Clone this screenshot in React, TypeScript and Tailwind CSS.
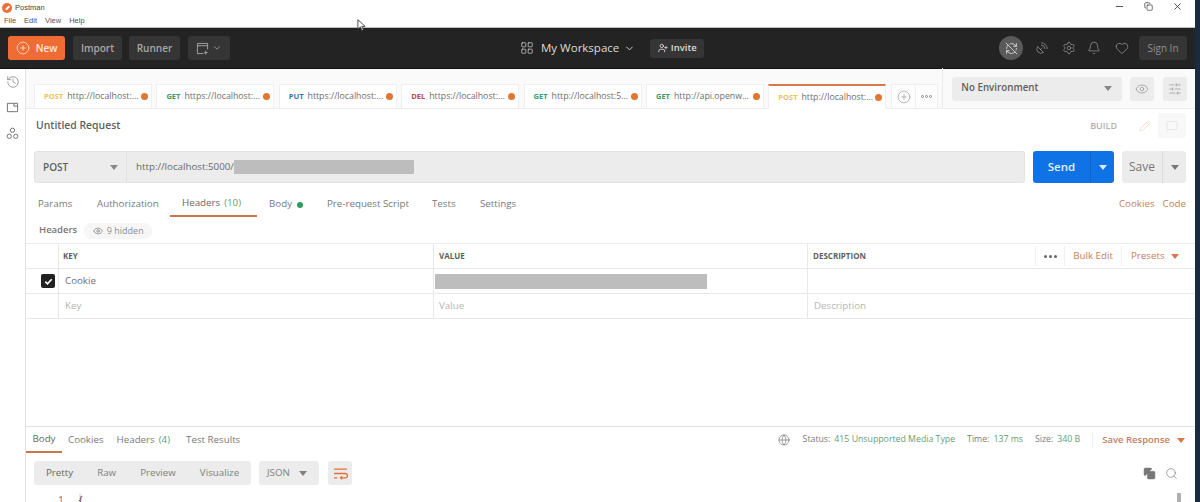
import { Bell, ChevronDown, Copy, Eye, Globe, Heart, History, LayoutGrid, MessageSquare, Minus, Pencil, PlusCircle, RefreshCwOff, SatelliteDish, Search, Settings, SlidersHorizontal, UserPlus, X } from "lucide-react";

const requestTabs = [
  { method: "POST", color: "text-[#e6c552]", url: "http://localhost:..." },
  { method: "GET", color: "text-[#3f9a66]", url: "https://localhost:..." },
  { method: "PUT", color: "text-[#2f79a8]", url: "https://localhost:..." },
  { method: "DEL", color: "text-[#b84a4a]", url: "https://localhost:..." },
  { method: "GET", color: "text-[#3f9a66]", url: "http://localhost:5..." },
  { method: "GET", color: "text-[#3f9a66]", url: "http://api.openw..." },
  { method: "POST", color: "text-[#e6c552]", url: "http://localhost:...", active: true },
];

const Caret = ({ className }: { className: string }) => (
  <span className={`block w-0 h-0 border-x-[4px] border-x-transparent border-t-[5px] ${className}`} />
);

const TableRow = ({ keyText, valueText, descText, muted, checked, bar }: { keyText: string; valueText?: string; descText?: string; muted?: boolean; checked?: boolean; bar?: boolean }) => (
  <div className="h-[25px] flex items-stretch border-b border-[#e8e8e8] text-[9.75px]">
    <div className="w-[33px] border-r border-[#e8e8e8] flex items-center justify-end pr-[3px]">
      {checked && (
        <div className="w-[14px] h-[14px] rounded-[2px] bg-[#222222] flex items-center justify-center">
          <svg viewBox="0 0 12 12" className="w-[11px] h-[11px]"><path d="M2.5 6.2l2.4 2.4 4.6-5" fill="none" stroke="#fff" strokeWidth="1.8" /></svg>
        </div>
      )}
    </div>
    <div className={`w-[375px] border-r border-[#e8e8e8] pl-[6px] flex items-center ${muted ? "text-[#b5b5b5]" : "text-[#707070]"}`}>{keyText}</div>
    <div className="w-[374px] border-r border-[#e8e8e8] pl-[5px] flex items-center text-[#b5b5b5]">
      {bar ? <div className="w-[272px] h-[15px] bg-[#bdbdbd] -ml-[4px]" /> : valueText}
    </div>
    <div className="flex-1 pl-[6px] flex items-center text-[#b5b5b5]">{descText}</div>
  </div>
);

export default function App() {
  return (
    <div className="w-[1200px] h-[502px] overflow-hidden flex bg-white relative font-['Open_Sans',sans-serif] text-[#707070]">
      <div className="w-[1195px] h-full flex flex-col">
        {/* Window title + menu */}
        <div className="h-[28px] shrink-0 flex border-b border-[#bdbdbd]">
          <div className="pl-[2px] pt-[2px]">
            <div className="flex items-center gap-[3px] h-[12px]">
              <span className="w-[10px] h-[10px] rounded-full bg-[#ef6c35] flex items-center justify-center">
                <span className="w-[5px] h-[1.5px] bg-white -rotate-45" />
              </span>
              <span className="text-[7.5px] text-[#444444] font-['Liberation_Sans',sans-serif]">Postman</span>
            </div>
            <div className="flex gap-[8px] pl-[2px] mt-[1px] text-[7.5px] leading-[12px] text-[#555555] font-['Liberation_Sans',sans-serif]">
              <span>File</span><span>Edit</span><span>View</span><span>Help</span>
            </div>
          </div>
          <div className="ml-auto flex items-start gap-[19px] pr-[12px] pt-[1px] text-[#444444]">
            <Minus className="w-[11px] h-[11px]" />
            <Copy className="w-[9px] h-[9px] mt-[1px]" strokeWidth={2} />
            <X className="w-[11px] h-[11px]" />
          </div>
        </div>

        {/* Header bar */}
        <div className="h-[41px] shrink-0 bg-[#232323] border-b border-[#111111] flex items-center pl-[8px] pr-[8px]">
          <div className="w-[57px] h-6 rounded-[3px] bg-[#ef6c35] text-[#fbe6dc] text-[10px] font-semibold flex items-center justify-center gap-[6px]">
            <PlusCircle className="w-[14px] h-[14px]" strokeWidth={1.3} />New
          </div>
          <div className="w-[49px] h-6 ml-[8px] flex items-center justify-center rounded-[3px] bg-[#353535] text-[#a8a8a8] text-[10px] font-semibold">Import</div>
          <div className="w-[51px] h-6 ml-[7px] flex items-center justify-center rounded-[3px] bg-[#353535] text-[#a8a8a8] text-[10px] font-semibold">Runner</div>
          <div className="w-[42px] h-6 ml-[8px] rounded-[3px] bg-[#353535] flex items-center justify-center gap-[3px] text-[#a8a8a8]">
            <svg viewBox="0 0 14 14" className="w-[13px] h-[13px]" fill="none" stroke="currentColor" strokeWidth="1"><path d="M8 12.5H1.5v-11h11V8M1.5 4h11M10.5 9.5v4M8.5 11.5h4" /></svg>
            <ChevronDown className="w-[10px] h-[10px]" />
          </div>
          <div className="ml-[290px] flex items-center text-[#dcdcdc]">
            <LayoutGrid className="w-[14px] h-[14px]" strokeWidth={1.2} />
            <span className="ml-[7px] text-[11.5px]">My Workspace</span>
            <ChevronDown className="w-[11px] h-[11px] ml-[5px]" />
            <div className="ml-[15px] w-[54px] h-[19px] rounded-[3px] bg-[#353535] flex items-center justify-center gap-[3px] text-[9.5px] font-semibold text-[#dcdcdc]">
              <UserPlus className="w-[10px] h-[10px]" />Invite
            </div>
          </div>
          <div className="ml-auto flex items-center text-[#a8a8a8]">
            <div className="w-6 h-6 rounded-full bg-[#5a5a5a] flex items-center justify-center text-[#e8e8e8]">
              <RefreshCwOff className="w-[13px] h-[13px]" strokeWidth={1.5} />
            </div>
            <SatelliteDish className="w-[14px] h-[14px] ml-[12px]" strokeWidth={1.1} />
            <Settings className="w-[14px] h-[14px] ml-[13px]" strokeWidth={1.1} />
            <Bell className="w-[14px] h-[14px] ml-[11px]" strokeWidth={1.1} />
            <Heart className="w-[14px] h-[14px] ml-[14px]" strokeWidth={1.1} />
            <div className="ml-[10px] w-[48px] h-6 rounded-[3px] bg-[#353535] flex items-center justify-center text-[10px] text-[#8f8f8f]">Sign In</div>
          </div>
        </div>

        <div className="flex-1 flex min-h-0">
          {/* Sidebar */}
          <div className="w-[26px] shrink-0 border-r border-[#e2e2e2] flex flex-col items-center pt-[6px] text-[#6a6a6a]">
            <History className="w-[14px] h-[14px]" strokeWidth={1.1} />
            <svg viewBox="0 0 14 14" className="w-[13px] h-[13px] mt-[12px]" fill="none" stroke="currentColor" strokeWidth="1"><path d="M1.5 2.5h11v9h-11zM8.5 2.5v3h4" /></svg>
            <svg viewBox="0 0 14 14" className="w-[13px] h-[13px] mt-[13px]" fill="none" stroke="currentColor" strokeWidth="1"><circle cx="7" cy="3.5" r="2.3" /><circle cx="3.5" cy="10" r="2.3" /><circle cx="10.5" cy="10" r="2.3" /></svg>
          </div>

          <div className="flex-1 min-w-0 flex flex-col">
            {/* Request tabs */}
            <div className="h-[40px] shrink-0 bg-[#fafafa] border-b border-[#ececec] flex items-end pl-[8px]">
              <div className="flex gap-[4.4px]">
                {requestTabs.map((tab, i) => (
                  <div key={i} className={`w-[118px] flex items-center pl-[9px] bg-white border-x border-[#efefef] text-[8.75px] whitespace-nowrap -mb-px ${tab.active ? "h-[25px] border-t-2 border-t-[#d9794a]" : "h-[24px] border-t"}`}>
                    <span className={`text-[7.5px] font-bold mr-[4px] ${tab.color}`}>{tab.method}</span>
                    <span className="text-[#6e6e6e]">{tab.url}</span>
                    <span className="w-[7px] h-[7px] rounded-full bg-[#e0762f] ml-auto mr-[3px]" />
                  </div>
                ))}
              </div>
              <div className="ml-[5px] w-[47px] h-[24px] flex border border-[#efefef] border-b-0 text-[#8a8a8a] bg-[#fdfdfd]">
                <div className="w-[24px] border-r border-[#efefef] flex items-center justify-center"><PlusCircle className="w-[14px] h-[14px]" strokeWidth={1} /></div>
                <div className="flex-1 flex items-center justify-center gap-[1px]">
                  <span className="w-[3px] h-[3px] rounded-full border border-[#888888]" />
                  <span className="w-[3px] h-[3px] rounded-full border border-[#888888]" />
                  <span className="w-[3px] h-[3px] rounded-full border border-[#888888]" />
                </div>
              </div>
              <div className="ml-[4px] h-[40px] flex-1 border-l border-[#ececec] flex items-center pl-[9px] pt-[1px] gap-[8px]">
                <div className="w-[170px] h-6 rounded-[3px] bg-[#ececec] flex items-center justify-between pl-[9px] pr-[10px] text-[9.75px] font-semibold text-[#606060]">
                  No Environment<Caret className="border-t-[#888888]" />
                </div>
                <div className="w-6 h-6 rounded-[3px] bg-[#ececec] flex items-center justify-center text-[#8a8a8a]"><Eye className="w-[14px] h-[14px]" strokeWidth={1.1} /></div>
                <div className="w-6 h-6 rounded-[3px] bg-[#ececec] flex items-center justify-center text-[#8a8a8a] ml-[1px]"><SlidersHorizontal className="w-[14px] h-[14px]" strokeWidth={1.1} /></div>
              </div>
            </div>

            {/* Request name */}
            <div className="h-[31px] shrink-0 flex items-center pl-[10px] pr-[9px] mt-[1px]">
              <span className="text-[10.4px] font-semibold text-[#5f5f5f]">Untitled Request</span>
              <span className="ml-auto text-[9px] font-semibold text-[#b0b0b0]">BUILD</span>
              <div className="ml-[14px] w-[55px] h-[25px] flex rounded-[3px] bg-[#f8f8f8]">
                <div className="w-[27px] bg-white flex items-center justify-center text-[#f0c4ae]"><Pencil className="w-[12px] h-[12px]" strokeWidth={1.1} /></div>
                <div className="flex-1 flex items-center justify-center text-[#d6d6d6]"><MessageSquare className="w-[12px] h-[12px]" strokeWidth={1.1} /></div>
              </div>
            </div>

            {/* URL bar */}
            <div className="h-[32px] shrink-0 flex pl-[8px] pr-[9px] mt-[10px]">
              <div className="w-[93px] bg-[#ececec] border border-[#e2e2e2] rounded-l-[3px] flex items-center justify-between pl-[8px] pr-[8px] text-[10px] font-semibold text-[#5f5f5f]">
                POST<Caret className="border-t-[#888888]" />
              </div>
              <div className="w-[898px] bg-[#ececec] border border-l-0 border-[#e2e2e2] rounded-r-[3px] flex items-center pl-[9px] text-[9.75px] text-[#6a6a6a]">
                http://localhost:5000/<div className="w-[180px] h-[14px] bg-[#bdbdbd]" />
              </div>
              <div className="ml-[8px] w-[81px] rounded-[3px] bg-[#0f72e5] flex text-white">
                <div className="w-[57px] flex items-center justify-center text-[11.5px] font-semibold text-[#e3f0ff]">Send</div>
                <div className="flex-1 border-l border-[#0d65cc] flex items-center justify-center"><Caret className="border-t-[#dcebff]" /></div>
              </div>
              <div className="ml-[8px] w-[64px] rounded-[3px] bg-[#ececec] flex">
                <div className="w-[40px] flex items-center justify-center text-[12px] text-[#777777]">Save</div>
                <div className="flex-1 border-l border-[#dcdcdc] flex items-center justify-center"><Caret className="border-t-[#777777]" /></div>
              </div>
            </div>

            {/* Request sub tabs */}
            <div className="h-[34px] shrink-0 flex items-stretch pr-[9px] text-[9.75px] text-[#7a7a7a]">
              <div className="flex items-center pt-[9px] pl-[12px] w-[71px]">Params</div>
              <div className="flex items-center pt-[9px] w-[73px]">Authorization</div>
              <div className="w-[87px] flex items-center justify-center pt-[9px] pr-[4px] border-b-2 border-[#c9764d] text-[#666666]">Headers<span className="ml-[4px] text-[#5f9e78]">(10)</span></div>
              <div className="flex items-center pt-[9px] ml-[12px] w-[58px]">Body<span className="ml-[5px] w-[6px] h-[6px] rounded-full bg-[#2f9a5a]" /></div>
              <div className="flex items-center pt-[9px] w-[105px]">Pre-request Script</div>
              <div className="flex items-center pt-[9px] w-[48px]">Tests</div>
              <div className="flex items-center pt-[9px]">Settings</div>
              <div className="ml-auto flex items-center pt-[9px] gap-[8px] text-[#c47f58]"><span>Cookies</span><span>Code</span></div>
            </div>

            {/* Headers label */}
            <div className="h-[26px] shrink-0 flex items-center pl-[13px] pt-[1px] text-[9.5px] font-semibold text-[#777777]">
              Headers
              <div className="ml-[7px] h-[16px] w-[68px] rounded-full bg-[#f6f6f6] flex items-center justify-center gap-[4px] font-normal text-[9px] text-[#8e8e8e]">
                <Eye className="w-[10px] h-[10px]" />9 hidden
              </div>
            </div>

            {/* Headers table */}
            <div className="shrink-0 border-t border-[#ececec]">
              <div className="h-[25px] flex items-stretch border-b border-[#e8e8e8] text-[8px] font-bold text-[#5f5f5f]">
                <div className="w-[33px] border-r border-[#e8e8e8]" />
                <div className="w-[375px] border-r border-[#e8e8e8] pl-[4px] flex items-center">KEY</div>
                <div className="w-[374px] border-r border-[#e8e8e8] pl-[5px] flex items-center">VALUE</div>
                <div className="flex-1 pl-[5px] flex items-center">
                  DESCRIPTION
                  <div className="ml-auto flex items-center h-[20px] text-[9.75px] font-normal text-[#c47f58]">
                    <div className="w-[30px] h-full border-x border-[#efefef] flex items-center justify-center gap-[2px]">
                      <span className="w-[3px] h-[3px] rounded-full bg-[#666666]" />
                      <span className="w-[3px] h-[3px] rounded-full bg-[#666666]" />
                      <span className="w-[3px] h-[3px] rounded-full bg-[#666666]" />
                    </div>
                    <div className="w-[57px] h-full border-r border-[#efefef] flex items-center justify-center">Bulk Edit</div>
                    <div className="w-[73px] h-full pl-[9px] flex items-center gap-[6px]">Presets<Caret className="border-t-[#d9794a]" /></div>
                  </div>
                </div>
              </div>
              <TableRow keyText="Cookie" checked bar />
              <TableRow keyText="Key" valueText="Value" descText="Description" muted />
            </div>

            <div className="flex-1" />

            {/* Response */}
            <div className="h-[76px] shrink-0 border-t border-[#e2e2e2]">
              <div className="h-[26px] flex items-stretch text-[9.75px] text-[#7a7a7a]">
                <div className="w-[36px] flex items-center justify-center border-b-2 border-[#c9764d] text-[#666666]">Body</div>
                <div className="flex items-center ml-[6px]">Cookies</div>
                <div className="flex items-center ml-[13px]">Headers<span className="ml-[4px] text-[#5f9e78]">(4)</span></div>
                <div className="flex items-center ml-[16px]">Test Results</div>
                <div className="ml-auto flex items-center text-[8.75px] pr-[10px]">
                  <Globe className="w-[12px] h-[12px] text-[#666666] mr-[13px]" strokeWidth={1.2} />
                  <span>Status:</span><span className="ml-[4px] text-[#5f9e78]">415 Unsupported Media Type</span>
                  <span className="ml-[12px]">Time:</span><span className="ml-[4px] text-[#5f9e78]">137 ms</span>
                  <span className="ml-[12px]">Size:</span><span className="ml-[4px] text-[#5f9e78]">340 B</span>
                  <div className="ml-[12px] pl-[9px] border-l border-[#efefef] h-[16px] flex items-center gap-[7px] text-[9.5px] font-semibold text-[#c47f58]">Save Response<Caret className="border-t-[#d9794a]" /></div>
                </div>
              </div>
              <div className="flex items-center pl-[8px] pr-[17px] mt-[8px]">
                <div className="w-[217px] h-6 rounded-[3px] bg-[#ececec] flex items-center text-[9.75px] text-[#808080]">
                  <span className="ml-[12px] text-[#666666]">Pretty</span>
                  <span className="ml-[24px]">Raw</span>
                  <span className="ml-[24px]">Preview</span>
                  <span className="ml-[24px]">Visualize</span>
                </div>
                <div className="ml-[8px] w-[60px] h-6 rounded-[3px] bg-[#ececec] flex items-center justify-between pl-[8px] pr-[12px] text-[9.75px] text-[#808080]">JSON<Caret className="border-t-[#808080]" /></div>
                <div className="ml-[9px] w-6 h-6 rounded-[3px] bg-[#ececec] flex items-center justify-center">
                  <svg viewBox="0 0 14 14" className="w-[15px] h-[15px]" fill="none" stroke="#e0703a" strokeWidth="1.2"><path d="M1 3h12M1 7h10.5a1.8 1.8 0 010 4H7M8.5 9.5L7 11l1.5 1.5M1 11h3" /></svg>
                </div>
                <div className="ml-auto flex items-center gap-[9px] text-[#777777]">
                  <Copy className="w-[13px] h-[13px] fill-[#777777]" strokeWidth={1} />
                  <Search className="w-[13px] h-[13px]" strokeWidth={1.2} />
                </div>
              </div>
              <div className="flex items-center text-[10px] leading-[12px] mt-[8px] pl-[32px] text-[#777777]">
                <span>1</span>
                <span className="ml-[15px] text-[#333333] bg-[#e8e8e8]">{"{"}</span>
                <div className="ml-auto mr-[14px] w-[4px] h-[14px] bg-[#b0b0b0]" />
              </div>
            </div>
          </div>
        </div>
      </div>
      <div className="w-[5px] shrink-0 bg-[#1b2a3c]" />
      {/* mouse pointer from the capture */}
      <svg viewBox="0 0 12 18" className="absolute left-[357px] top-[19px] w-[9px] h-[13px]"><path d="M1 1v13l3.4-3 2.2 5 2-.9-2.2-4.9H11z" fill="#fff" stroke="#333" strokeWidth="1.2" /></svg>
    </div>
  );
}
